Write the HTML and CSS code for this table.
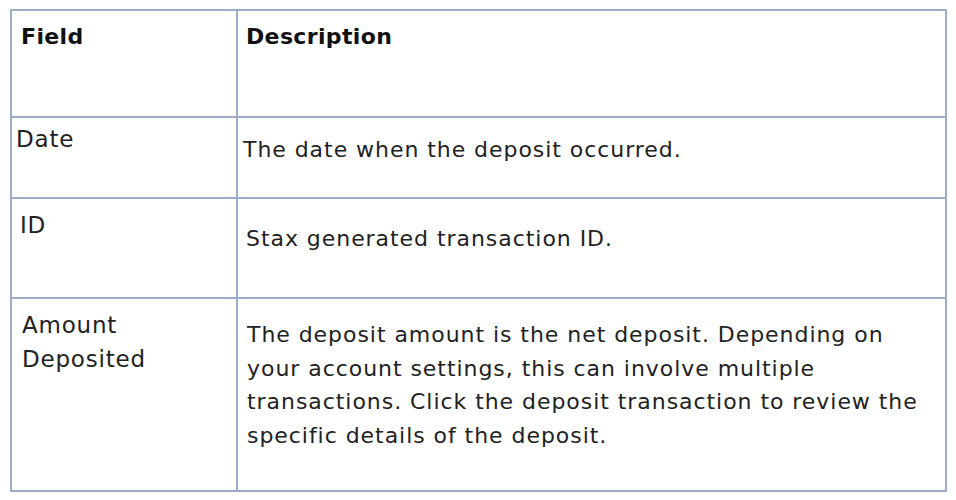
FILE: index.html
```html
<!DOCTYPE html>
<html lang="en">
<head>
<meta charset="utf-8">
<title>Deposit fields</title>
<link rel="stylesheet" href="styles.css">
</head>
<body>
<div class="table">
  <div class="cell head field-head">Field</div>
  <div class="cell head desc-head">Description</div>

  <div class="cell field r-date">Date</div>
  <div class="cell desc r-date-d">The date when the deposit occurred.</div>

  <div class="cell field r-id">ID</div>
  <div class="cell desc r-id-d">Stax generated transaction ID.</div>

  <div class="cell field r-amt">Amount<br>Deposited</div>
  <div class="cell desc r-amt-d">The deposit amount is the net deposit. Depending on<br>your account settings, this can involve multiple<br>transactions. Click the deposit transaction to review the<br>specific details of the deposit.</div>
</div>
</body>
</html>
```
FILE: styles.css
```css
html, body {
  margin: 0;
  background: #ffffff;
}
body {
  padding: 9px 0 0 10px;
  font-family: "DejaVu Sans", "Noto Sans", sans-serif;
}
.table {
  display: grid;
  grid-template-columns: 224px 707px;
  grid-template-rows: 105px 79px 98px 191px;
  gap: 2px;
  padding: 2px;
  width: max-content;
  background: #9cadc5;
}
.cell {
  background: #ffffff;
  line-height: 33.5px;
  white-space: nowrap;
  box-sizing: border-box;
}
.head {
  font-weight: bold;
  font-size: 22px;
  letter-spacing: 0.35px;
  color: #111111;
  padding-top: 9px;
}
.field-head { padding-left: 9px; }
.desc-head { padding-left: 8px; }
.field {
  font-size: 23px;
  letter-spacing: 0.8px;
  color: #222222;
}
.desc {
  font-size: 22px;
  letter-spacing: 0.95px;
  color: #222222;
}
.r-date { padding: 5px 0 0 4px; }
.r-date-d { padding: 15px 0 0 5px; }
.r-id { padding: 10px 0 0 8px; }
.r-id-d { padding: 23px 0 0 8px; }
.r-amt { padding: 10px 0 0 10px; }
.r-amt-d { padding: 19px 0 0 9px; }
```
